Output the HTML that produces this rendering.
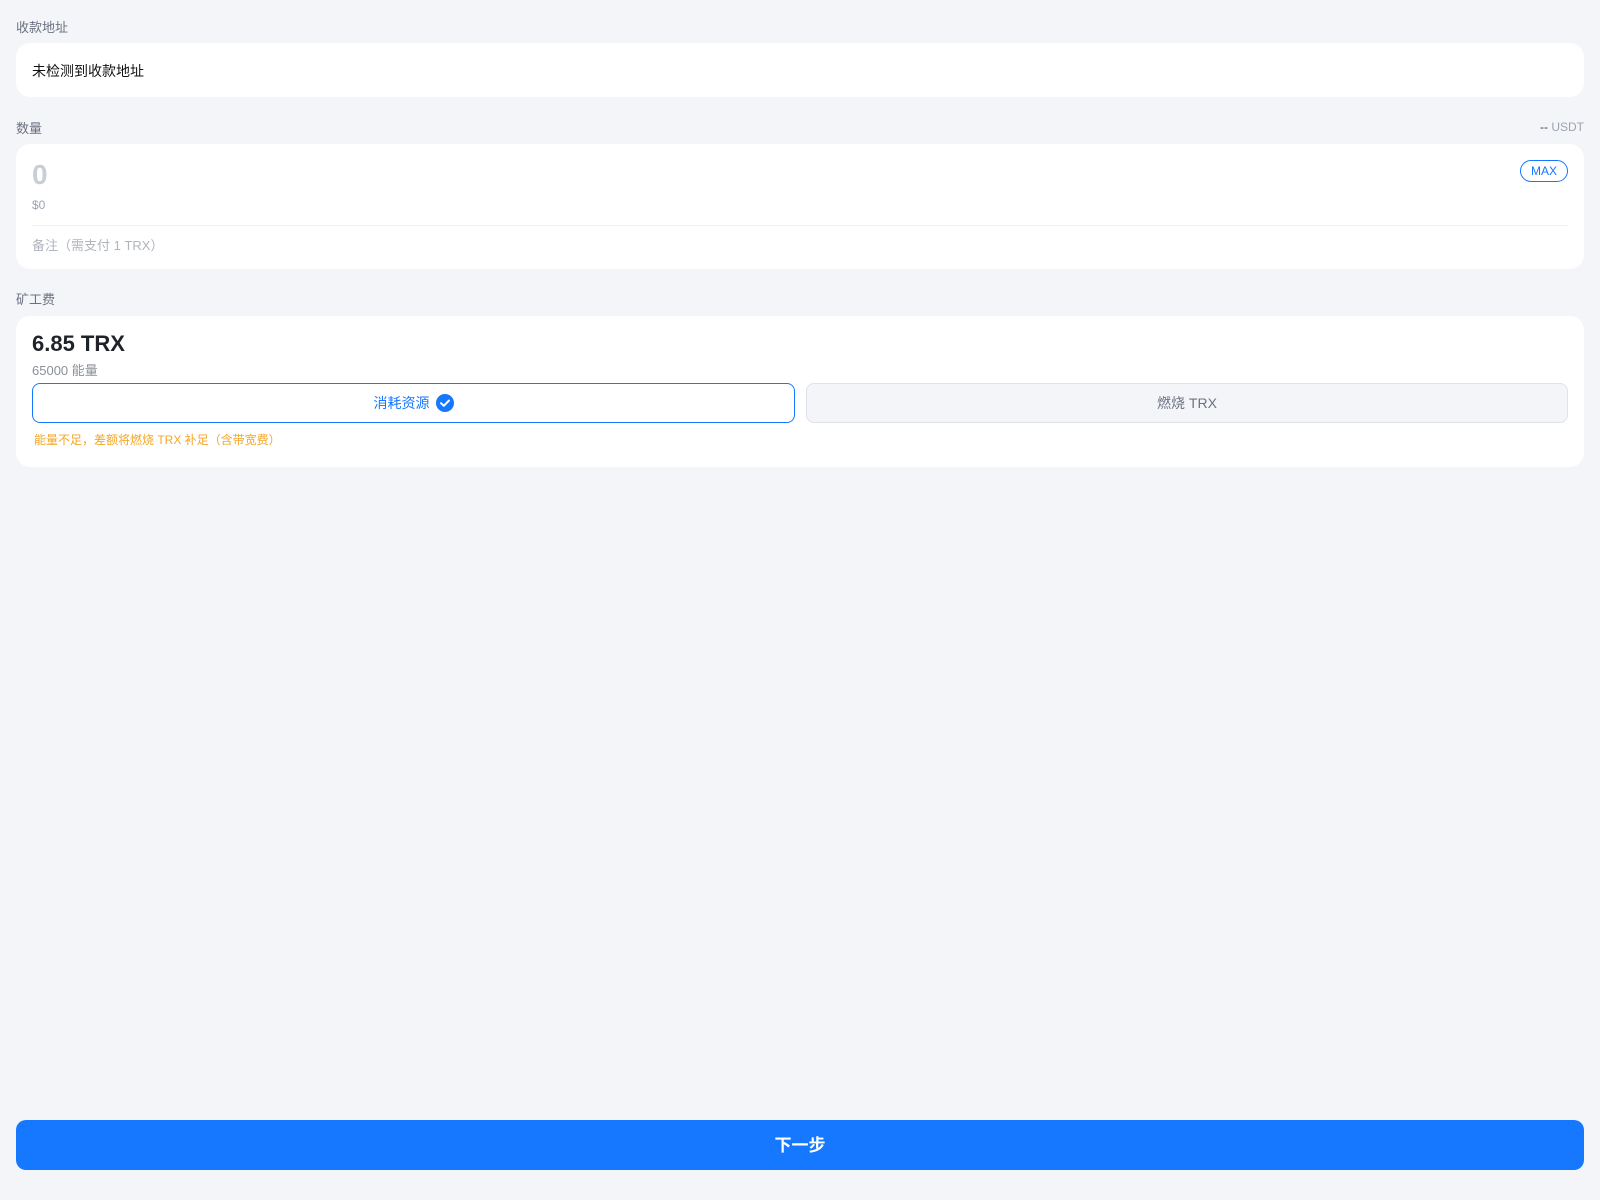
<!DOCTYPE html>
<html><head><meta charset="utf-8"><style>
*{box-sizing:border-box;margin:0;padding:0}
body{width:1600px;height:1200px;background:#f4f5f9;font-family:"Liberation Sans","Noto Sans CJK SC",sans-serif;position:relative;overflow:hidden;color:#1f2329}
.lbl{position:absolute;left:16px;font-size:13px;color:#6b7280}
.card{position:absolute;left:16px;width:1568px;background:#fff;border-radius:14px}
.abs{position:absolute}
</style></head><body>
<div class="lbl" style="top:17px">收款地址</div>
<div class="card" style="top:43px;height:54px"><div class="abs" style="left:16px;top:18px;font-size:14px;color:#111">未检测到收款地址</div></div>
<div class="lbl" style="top:118px">数量</div>
<div class="abs" style="right:16px;top:120px;font-size:12px;color:#9ca3af"><span style="color:#374151">--</span> USDT</div>
<div class="card" style="top:144px;height:125px">
<div class="abs" style="left:16px;top:15px;font-size:28px;font-weight:bold;color:#c9ced6">0</div>
<div class="abs" style="left:16px;top:54px;font-size:12px;color:#9ca3af">$0</div>
<div class="abs" style="right:16px;top:16px;width:48px;height:22px;border:1px solid #1677ff;border-radius:11px;color:#1677ff;font-size:12px;text-align:center;line-height:20px">MAX</div>
<div class="abs" style="left:16px;right:16px;top:81px;border-top:1px solid #f0f1f4"></div>
<div class="abs" style="left:16px;top:91px;font-size:13px;color:#b0b5bd">备注（需支付 1 TRX）</div>
</div>
<div class="lbl" style="top:289px">矿工费</div>
<div class="card" style="top:316px;height:151px">
<div class="abs" style="left:16px;top:15px;font-size:22px;font-weight:bold;color:#1f2329">6.85 TRX</div>
<div class="abs" style="left:16px;top:44px;font-size:13px;color:#8a9099">65000 能量</div>
<div class="abs" style="left:16px;top:67px;width:763px;height:40px;border:1px solid #1677ff;border-radius:8px;color:#1677ff;font-size:14px;display:flex;align-items:center;justify-content:center">消耗资源<svg width="18" height="18" viewBox="0 0 18 18" style="margin-left:6px"><circle cx="9" cy="9" r="9" fill="#1677ff"/><path d="M5 9.2l2.8 2.6L13 6.5" stroke="#fff" stroke-width="2" fill="none" stroke-linecap="round" stroke-linejoin="round"/></svg></div>
<div class="abs" style="left:790px;top:67px;width:762px;height:40px;border:1px solid #dfe2e8;background:#f4f5f9;border-radius:8px;color:#6b7280;font-size:14px;display:flex;align-items:center;justify-content:center">燃烧 TRX</div>
<div class="abs" style="left:18px;top:115px;font-size:12px;color:#f5a623">能量不足，差额将燃烧 TRX 补足（含带宽费）</div>
</div>
<div class="abs" style="left:16px;top:1120px;width:1568px;height:50px;background:#1677ff;border-radius:10px;color:#fff;font-size:17px;font-weight:bold;text-align:center;line-height:52px">下一步</div>
</body></html>
